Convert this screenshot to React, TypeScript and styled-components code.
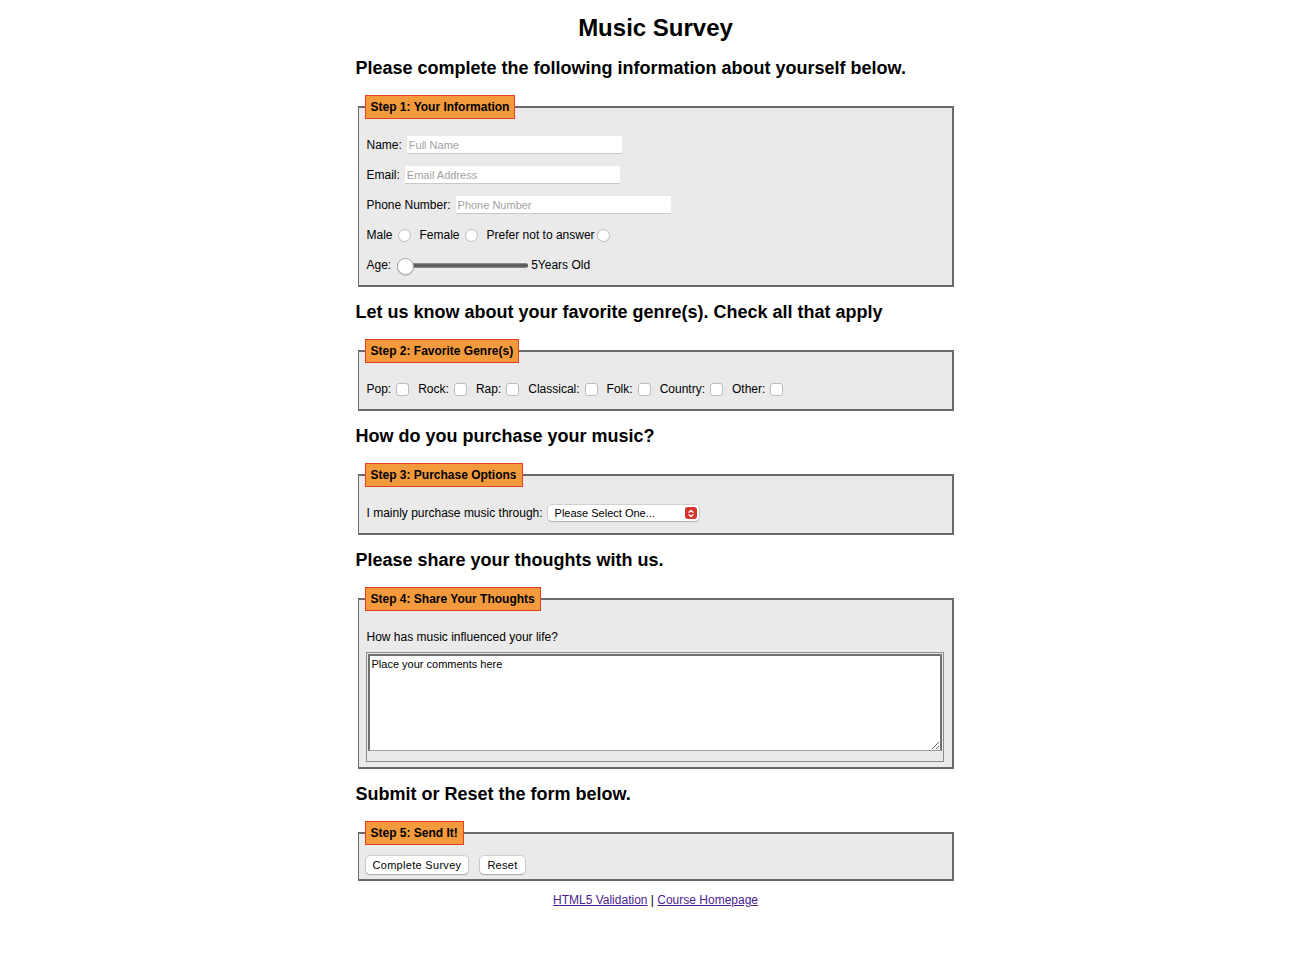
import React from "react";
import styled, { createGlobalStyle } from "styled-components";

const GlobalStyle = createGlobalStyle`
  html, body { margin: 0; padding: 0; background: #ffffff; }
  body { font-family: "Liberation Sans", Arial, sans-serif; color: #000; }
  * { box-sizing: border-box; }
`;

const Page = styled.main`
  width: 600px;
  margin: 0 auto;
  padding-top: 14px;
`;

const Title = styled.h1`
  margin: 0;
  font-size: 24px;
  line-height: 28px;
  font-weight: bold;
  text-align: center;
`;

const SectionHeading = styled.h2<{ $first?: boolean }>`
  margin: ${(p) => (p.$first ? "15px" : "14px")} 0 16px 0;
  font-size: 18px;
  line-height: 22px;
  font-weight: bold;
`;

const Fieldset = styled.fieldset`
  margin: 0 2px;
  padding: 11px 8px 5px 8px;
  border-style: solid;
  border-color: #6a6a6a;
  border-width: 2px 2px 2px 1px;
  background: #eaeaea;
  min-width: 0;
`;

const Legend = styled.legend`
  margin-left: -2px;
  padding: 4px 5px;
  background: #f39a3c;
  border: 1px solid #e8401c;
  font-size: 12px;
  line-height: 14px;
  font-weight: bold;
`;

const Row = styled.div`
  display: flex;
  align-items: center;
  height: 30px;
  font-size: 12px;
`;

const Label = styled.label`
  font-size: 12px;
  line-height: 14px;
`;

const TextInput = styled.input<{ $w: number }>`
  width: ${(p) => p.$w}px;
  height: 18px;
  margin-left: 5px;
  padding: 0 2px;
  border: 0;
  border-bottom: 1px solid #c9c9c9;
  background: #ffffff;
  font-family: "Liberation Sans", Arial, sans-serif;
  font-size: 11px;
  outline: none;
  &::placeholder { color: #a2a2a2; }
`;

const Radio = styled.input<{ $tight?: boolean }>`
  appearance: none;
  width: 13px;
  height: 13px;
  margin: 0 9px 0 ${(p) => (p.$tight ? "2px" : "5px")};
  border: 1px solid #bdbdbd;
  border-radius: 50%;
  background: #ffffff;
`;

const Check = styled.input`
  appearance: none;
  width: 13px;
  height: 13px;
  margin: 0 9px 0 5px;
  border: 1px solid #bdbdbd;
  border-radius: 3px;
  background: #ffffff;
`;

const Range = styled.input`
  appearance: none;
  -webkit-appearance: none;
  width: 131px;
  height: 18px;
  margin: 0 3px 0 6px;
  background: transparent;
  &::-webkit-slider-runnable-track {
    height: 5px;
    border-radius: 2px;
    background: linear-gradient(#9a9a9a, #4e4e4e 45%, #8a8a8a);
  }
  &::-webkit-slider-thumb {
    -webkit-appearance: none;
    width: 17px;
    height: 17px;
    margin-top: -5px;
    border-radius: 50%;
    background: #ffffff;
    border: 1px solid #a8a8a8;
    box-shadow: 0 1px 1px rgba(0,0,0,0.15);
  }
`;

const SelectWrap = styled.div`
  position: relative;
  margin-left: 5px;
  width: 151px;
  height: 16px;
`;

const Select = styled.select`
  appearance: none;
  -webkit-appearance: none;
  width: 100%;
  height: 16px;
  padding: 0 20px 0 7px;
  border: 0;
  border-radius: 4px;
  background: #ffffff;
  box-shadow: 0 0 0 0.5px rgba(0,0,0,0.22), 0 1px 1.5px rgba(0,0,0,0.18);
  font-family: "Liberation Sans", Arial, sans-serif;
  font-size: 11px;
  color: #000;
`;

const SelectArrow = styled.span`
  position: absolute;
  right: 2px;
  top: 2px;
  width: 12px;
  height: 12px;
  border-radius: 3px;
  background: #d4342b;
  pointer-events: none;
  display: flex;
  align-items: center;
  justify-content: center;
`;

const Question = styled.div`
  display: flex;
  align-items: center;
  height: 30px;
  font-size: 12px;
`;

const TextBox = styled.div`
  border: 1px solid #8d8d8d;
  padding: 1px 1px 10px 1px;
  margin-left: -1px;
`;

const Comments = styled.textarea`
  display: block;
  width: 100%;
  height: 97px;
  padding: 2px 2px;
  border-style: solid;
  border-color: #707070 #707070 #a0a0a0 #707070;
  border-width: 2px 2px 1px 2px;
  background: #ffffff;
  font-family: "Liberation Sans", Arial, sans-serif;
  font-size: 11px;
  line-height: 13px;
  resize: both;
  outline: none;
`;

const ButtonRow = styled.div`
  display: flex;
  align-items: center;
  gap: 12px;
  height: 18px;
  margin-left: -1px;
`;

const Button = styled.button`
  height: 18px;
  padding: 0 7px;
  border: 0;
  border-radius: 4px;
  background: #ffffff;
  box-shadow: 0 0 0 0.5px rgba(0,0,0,0.22), 0 1px 1.5px rgba(0,0,0,0.2);
  font-family: "Liberation Sans", Arial, sans-serif;
  font-size: 11px;
  letter-spacing: 0.3px;
  color: #000;
`;

const Footer = styled.p`
  margin: 12px 0 0 0;
  text-align: center;
  font-size: 12px;
  line-height: 14px;
`;

const Link = styled.a`
  color: #4a218f;
  text-decoration: underline;
`;

const ChevronIcon = () => (
  <svg width="8" height="9" viewBox="0 0 8 9" fill="none" stroke="#fff" strokeWidth="1.3" strokeLinecap="round" strokeLinejoin="round">
    <path d="M2 3.3 L4 1.5 L6 3.3" />
    <path d="M2 5.7 L4 7.5 L6 5.7" />
  </svg>
);

const genres = ["Pop", "Rock", "Rap", "Classical", "Folk", "Country", "Other"];

export default function App() {
  return (
    <>
      <GlobalStyle />
      <Page>
        <Title>Music Survey</Title>

        <SectionHeading $first>Please complete the following information about yourself below.</SectionHeading>
        <Fieldset>
          <Legend>Step 1: Your Information</Legend>
          <Row>
            <Label htmlFor="name">Name:</Label>
            <TextInput id="name" $w={215} placeholder="Full Name" />
          </Row>
          <Row>
            <Label htmlFor="email">Email:</Label>
            <TextInput id="email" $w={215} placeholder="Email Address" />
          </Row>
          <Row>
            <Label htmlFor="phone">Phone Number:</Label>
            <TextInput id="phone" $w={215} placeholder="Phone Number" />
          </Row>
          <Row>
            <Label>Male</Label>
            <Radio type="radio" name="gender" />
            <Label>Female</Label>
            <Radio type="radio" name="gender" />
            <Label>Prefer not to answer</Label>
            <Radio type="radio" name="gender" $tight />
          </Row>
          <Row>
            <Label>Age:</Label>
            <Range type="range" min={5} max={100} defaultValue={5} />
            <Label>5Years Old</Label>
          </Row>
        </Fieldset>

        <SectionHeading>Let us know about your favorite genre(s). Check all that apply</SectionHeading>
        <Fieldset>
          <Legend>Step 2: Favorite Genre(s)</Legend>
          <Row>
            {genres.map((g) => (
              <React.Fragment key={g}>
                <Label>{g}:</Label>
                <Check type="checkbox" />
              </React.Fragment>
            ))}
          </Row>
        </Fieldset>

        <SectionHeading>How do you purchase your music?</SectionHeading>
        <Fieldset>
          <Legend>Step 3: Purchase Options</Legend>
          <Row>
            <Label>I mainly purchase music through:</Label>
            <SelectWrap>
              <Select defaultValue="">
                <option value="">Please Select One...</option>
                <option>Online Store</option>
                <option>Streaming Service</option>
                <option>Physical Media</option>
              </Select>
              <SelectArrow>
                <ChevronIcon />
              </SelectArrow>
            </SelectWrap>
          </Row>
        </Fieldset>

        <SectionHeading>Please share your thoughts with us.</SectionHeading>
        <Fieldset>
          <Legend>Step 4: Share Your Thoughts</Legend>
          <Question>How has music influenced your life?</Question>
          <TextBox>
            <Comments defaultValue="Place your comments here" />
          </TextBox>
        </Fieldset>

        <SectionHeading>Submit or Reset the form below.</SectionHeading>
        <Fieldset>
          <Legend>Step 5: Send It!</Legend>
          <ButtonRow>
            <Button type="button">Complete Survey</Button>
            <Button type="button">Reset</Button>
          </ButtonRow>
        </Fieldset>

        <Footer>
          <Link href="#">HTML5 Validation</Link> | <Link href="#">Course Homepage</Link>
        </Footer>
      </Page>
    </>
  );
}
